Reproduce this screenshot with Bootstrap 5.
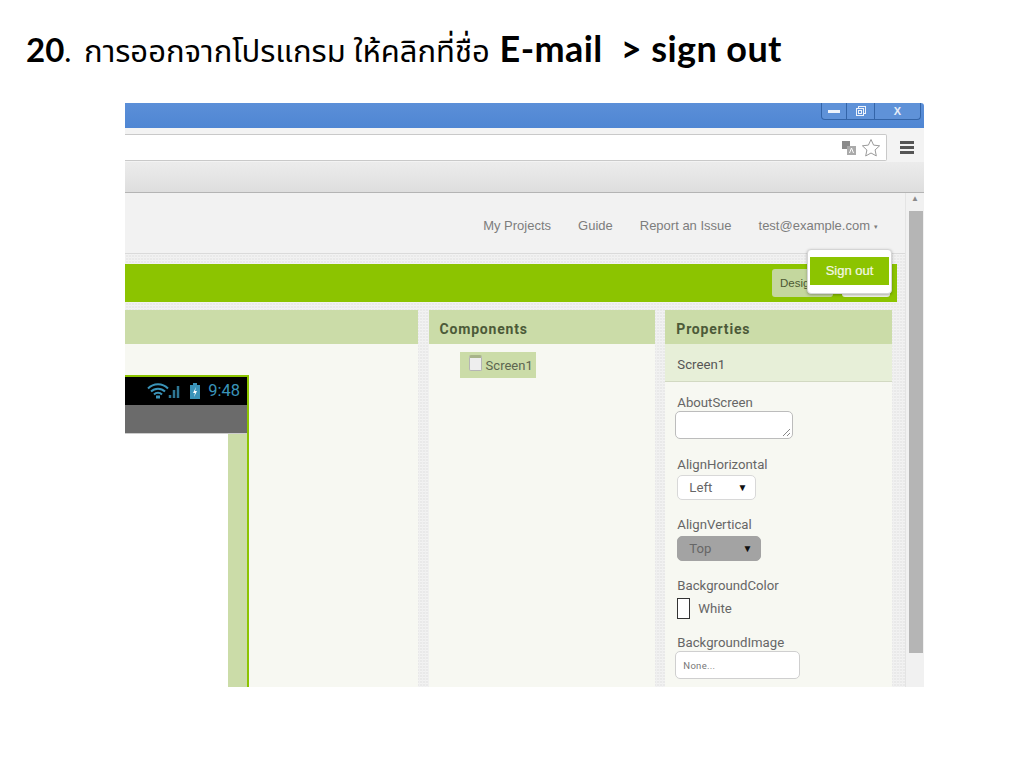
<!DOCTYPE html>
<html lang="th">
<head>
<meta charset="utf-8">
<title>Sign out</title>
<link href="https://cdn.jsdelivr.net/npm/bootstrap@5.3.0/dist/css/bootstrap.min.css" rel="stylesheet">
<style>
html,body{background:#fff;margin:0;height:768px;overflow:hidden}
.slide-title{font-family:Lato,"Noto Sans Thai","Noto Sans",sans-serif;font-size:30px;line-height:40px;color:#000;padding:28px 0 0 26px;height:103px;margin:0;font-weight:400;white-space:pre}
.slide-title b{font-weight:700;font-size:36px;letter-spacing:.4px}
.slide-title .thai{font-size:31px;margin-left:5px;margin-right:2px}
.slide-title .num{font-size:33px;letter-spacing:0}
.shot{margin-left:125px;width:799px;height:584px;font-family:"Liberation Sans",Arial,sans-serif;position:relative;overflow:hidden}
.win-title{height:25px;background:linear-gradient(#5b8fd8,#4f86d3);border-top-right-radius:3px;padding-right:3px}
.win-btns{height:17px;border:1px solid #3465a8;border-top:0;border-radius:0 0 4px 4px;background:#5f92d8}
.win-btns span{display:flex;align-items:center;justify-content:center;height:16px;border-right:1px solid #3465a8;color:#e8eef8}
.win-btns span:last-child{border-right:0}
.tool-row{height:34px;background:#f3f3f3;padding:6px 0 0 0}
.addr{width:762px;height:27px;background:#fff;border:1px solid #c9c9c9;border-left:0;border-radius:0 2px 2px 0;padding-right:5px}
.burger{width:14px;margin-left:13px;margin-top:7px}
.burger i{display:block;height:3px;background:#555;margin-bottom:2px}
.book-row{height:31px;background:linear-gradient(#ececec,#dedede);border-bottom:1px solid #b4b4b4}
.page-row{height:494px}
.page-col{width:780px;background-color:#e9e9e9;background-image:repeating-linear-gradient(90deg,#f0f0f0 0 1px,transparent 1px 3px),repeating-linear-gradient(0deg,#f3f3f3 0 1px,transparent 1px 3px)}
.top-nav{height:61px;background:#f2f2f2;border-bottom:1px solid #dadada;color:#7d7d7d;font-size:13px;padding:5px 27px 0 0;gap:27px}
.caret-mini{font-size:7px;margin-left:4px;vertical-align:1px}
.green-bar{height:38px;width:772px;margin-top:10px;background:#8cc400;padding:0 7px 0 0;gap:9px}
.pill{height:28px;border-radius:3px;font-size:11.500px;color:#4d5a33;padding:0 0 0 8px;line-height:28px}
.pill-a{width:61px;background:#c4d79e}
.pill-b{width:48px;background:#f3f5ec}
.panels{margin-top:8px;width:767px;height:377px;gap:10px;font-family:Roboto,"Liberation Sans",sans-serif}
.panel{background:#f7f8f2;height:377px}
.p-view{width:293px;margin-right:1px}
.p-comp{width:227px}
.p-prop{width:227px}
.p-head{height:34px;background:#cbdca8;color:#4c5a38;font-weight:700;font-size:14px;line-height:38px;padding-left:11px;letter-spacing:.8px}
.phone{width:124px;margin-top:31px;height:312px;border-top:2px solid #8cc400;border-right:2px solid #8cc400;background:#fff}
.phone-status{height:28px;background:#000;color:#3a93b8;font-size:16.500px;padding-right:7px}
.phone-title{height:29px;background:#6b6b6b;border-bottom:1px solid #ccc}
.phone-body{height:253px}
.phone-scroll{width:19px;background:#cbdca8}
.tree-item{margin:8px 0 0 31px;width:76px;height:26px;background:#cbdca8;color:#5c6650;font-size:13px;gap:4px;padding:3px 0 0 9px}
.tree-ic{width:13px;height:16px;background:#eeeeee;border:1px solid #b5b5b5;border-top:3px solid #a8b48a;border-radius:2px}
.tree-label{margin-top:1px}
.sel-name{height:38px;background:#e7efd8;border-bottom:1px solid #d2d9c2;color:#555;font-size:13.200px;line-height:41px;padding-left:12px}
.props{padding:13px 0 0 10px;color:#666;font-size:13.200px}
.prop-label{line-height:16px;padding-left:2px}
.gap-l{margin-top:18px}
.gap-m{margin-top:17px}
.gap-s{margin-top:16px}
.ta{width:118px;height:28px;margin-top:0;background:#fff;border:1px solid #bcbcbc;border-radius:5px;position:relative}
.ta svg{position:absolute;right:1px;bottom:1px}
.sel{height:25px;margin:2px 0 0 2px;border-radius:5px;background:#fff;border:1px solid #d8d8d8;padding:0 8px 0 11px;color:#666}
.sel-a{width:79px}
.sel-b{width:84px;background:#a3a3a3;border-color:#a3a3a3;margin-top:3px}
.sel-arrow{font-size:10px;color:#111}
.swatch-row{margin-top:4px}
.swatch{width:13px;height:21px;border:1px solid #333;background:#fff;margin:0 8px 0 2px}
.none-box{width:125px;height:28px;background:#fff;border:1px solid #cfcfcf;border-radius:5px;font-size:9.500px;line-height:27px;padding-left:7px;color:#777;margin-top:0;letter-spacing:.3px}
.scrollcol{width:19px;background:#f1f1f1;border-left:1px solid #e4e4e4}
.scroll-up{height:18px;color:#8a8a8a;font-size:8px;line-height:12px;text-align:center}
.scroll-thumb{height:442px;background:#b5b5b5;margin-left:3px;width:14px}
.menu-pop{position:absolute;left:682px;top:146px;width:85px;height:45px;background:#fff;border:1px solid #d5d5d5;border-radius:4px;box-shadow:0 1px 3px rgba(0,0,0,.3);padding:7px 2px 0 2px}
.menu-pop div{height:28px;background:#8cc400;color:#f4f8e6;font-size:13px;line-height:28px;text-align:center;-webkit-text-stroke:.2px #f4f8e6}
.st-wifi{margin-right:8px}
.st-batt{margin-right:8px}
</style>
</head>
<body>
<h1 class="slide-title"><b class="num">20</b>. <span class="thai">การออกจากโปรแกรม ให้คลิกที่ชื่อ</span> <b>E-mail  &gt; sign out</b></h1>
<div class="shot">
  <div class="win-title d-flex justify-content-end">
    <div class="win-btns d-flex">
      <span style="width:25px"><svg width="12" height="4"><rect width="12" height="3" y="1" fill="#eef3fb"/></svg></span>
      <span style="width:28px"><svg width="12" height="12" fill="none" stroke="#eef3fb"><rect x="3.500" y="1.500" width="7" height="7"/><rect x="1.500" y="3.500" width="7" height="7" fill="#5f92d8"/><rect x="3.500" y="5.500" width="3" height="3"/></svg></span>
      <span style="width:45px;font-size:11px;font-weight:700">X</span>
    </div>
  </div>
  <div class="tool-row d-flex">
    <div class="addr d-flex justify-content-end align-items-center gap-1">
      <svg width="16" height="16" viewBox="0 0 16 16"><rect x="1" y="1" width="8" height="8" fill="#8a8a8a"/><rect x="6" y="6" width="9" height="9" fill="#aaa"/><path d="M8.500 13l2-5 2 5" fill="none" stroke="#fff"/></svg>
      <svg width="20" height="20" viewBox="0 0 20 20"><path d="M10 1.500l2.600 5.600 6 .7-4.500 4.100 1.200 6L10 15l-5.300 3 1.200-6L1.400 7.800l6-.7z" fill="#fff" stroke="#9a9a9a"/></svg>
    </div>
    <div class="burger"><i></i><i></i><i></i></div>
  </div>
  <div class="book-row"></div>
  <div class="page-row d-flex">
    <div class="page-col">
      <div class="top-nav d-flex align-items-center justify-content-end">
        <span>My Projects</span><span>Guide</span><span>Report an Issue</span><span>test@example.com<span class="caret-mini">▾</span></span>
      </div>
      <div class="green-bar d-flex justify-content-end align-items-center">
        <div class="pill pill-a">Desig</div><div class="pill pill-b"></div>
      </div>
      <div class="panels d-flex">
        <section class="panel p-view">
          <div class="p-head"></div>
          <div class="phone">
            <div class="phone-status d-flex align-items-center justify-content-end">
              <svg class="st-wifi" width="35" height="16" viewBox="0 0 35 16" fill="none" stroke="#3a93b8" stroke-width="2"><path d="M1 5.500a14 14 0 0 1 20 0M4 8.500a10 10 0 0 1 14 0M7 11.500a5.500 5.500 0 0 1 8 0"/><path d="M9 14h4" stroke-width="3"/><path d="M23 15v-3M27 15V7M31 15V3" stroke-width="2.500" opacity=".8"/></svg>
              <svg class="st-batt" width="10" height="16" viewBox="0 0 10 16"><rect y="2" width="10" height="14" fill="#3a93b8"/><rect x="3" width="4" height="2" fill="#3a93b8"/><path d="M6 4L3 10h2l-1 4 3-6H5z" fill="#fff"/></svg>
              <span>9:48</span>
            </div>
            <div class="phone-title"></div>
            <div class="phone-body d-flex justify-content-end"><div class="phone-scroll"></div></div>
          </div>
        </section>
        <section class="panel p-comp">
          <div class="p-head">Components</div>
          <div class="tree-item d-flex"><span class="tree-ic"></span><span class="tree-label">Screen1</span></div>
        </section>
        <section class="panel p-prop">
          <div class="p-head">Properties</div>
          <div class="sel-name">Screen1</div>
          <div class="props">
            <div class="prop-label">AboutScreen</div>
            <div class="ta"><svg width="9" height="9"><path d="M1 8l7-7M5 8l3-3" stroke="#888"/></svg></div>
            <div class="prop-label gap-l">AlignHorizontal</div>
            <div class="sel sel-a d-flex align-items-center justify-content-between"><span>Left</span><span class="sel-arrow">▼</span></div>
            <div class="prop-label gap-m">AlignVertical</div>
            <div class="sel sel-b d-flex align-items-center justify-content-between"><span>Top</span><span class="sel-arrow">▼</span></div>
            <div class="prop-label gap-m">BackgroundColor</div>
            <div class="d-flex align-items-center swatch-row"><span class="swatch"></span><span>White</span></div>
            <div class="prop-label gap-s">BackgroundImage</div>
            <div class="none-box">None...</div>
          </div>
        </section>
      </div>
    </div>
    <div class="scrollcol">
      <div class="scroll-up">▲</div>
      <div class="scroll-thumb"></div>
    </div>
  </div>
  <div class="menu-pop"><div>Sign out</div></div>
</div>
<script src="https://cdn.jsdelivr.net/npm/bootstrap@5.3.0/dist/js/bootstrap.bundle.min.js"></script>
</body>
</html>
